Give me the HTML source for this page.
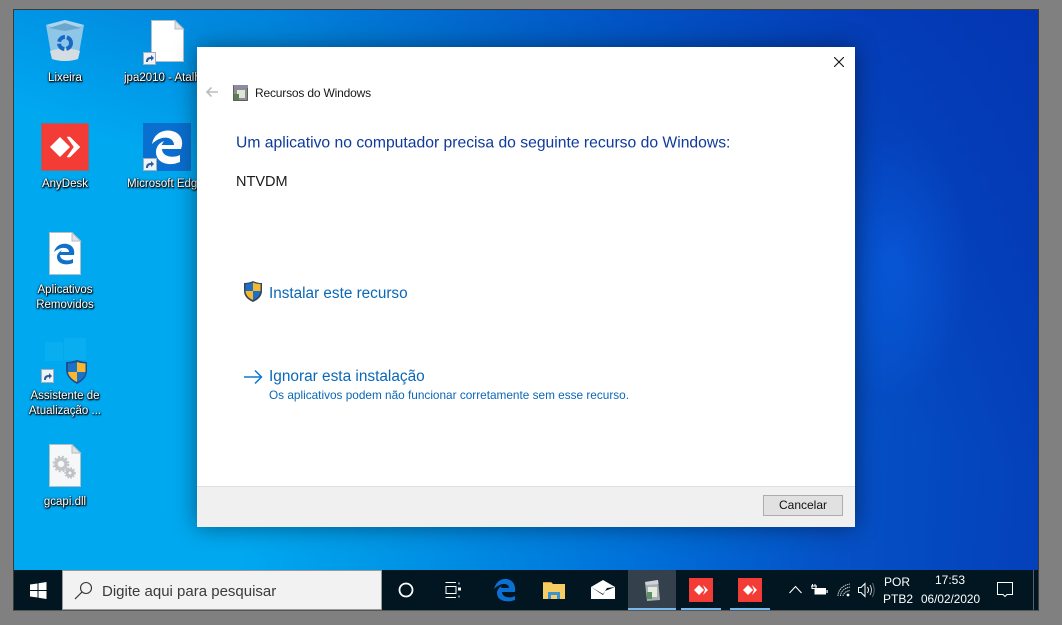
<!DOCTYPE html>
<html><head><meta charset="utf-8">
<style>
*{box-sizing:border-box}
html,body{margin:0;padding:0;width:1062px;height:625px;overflow:hidden;background:#808080;font-family:"Liberation Sans","DejaVu Sans",sans-serif}
.a{position:absolute}
.t{position:absolute;white-space:nowrap}
#desk{position:absolute;left:13px;top:9px;width:1026px;height:602px;border:1px solid #3a3a3a;border-bottom-color:#555;overflow:hidden;
background:
 radial-gradient(ellipse 75px 140px at 880px 250px,rgba(10,105,235,.8),rgba(10,105,235,0)),
 linear-gradient(93deg,#00a8f0 0,#00a8f0 24%,#0096e6 38%,#0070d8 62%,#0551c6 80%,#0440ba 100%);}
#desk:before{content:"";position:absolute;inset:0;background:linear-gradient(200deg,rgba(4,50,175,.75) 0,rgba(4,50,175,.3) 30%,rgba(4,50,175,0) 48%);}
.lab{position:absolute;color:#fff;font-size:11.500px;line-height:15px;text-align:center;text-shadow:0 1px 2px #000,1px 1px 1px #000,0 0 2px rgba(0,0,0,.8);white-space:nowrap}
#dlg{position:absolute;left:197px;top:47px;width:658px;height:480px;background:#fff;box-shadow:0 0 22px rgba(0,0,0,.45)}
#bar{position:absolute;left:14px;top:570px;width:1024px;height:40px;background:#011621}
.ul{position:absolute;height:2px;top:38px;background:#76b9ed}
</style></head><body>
<div id="desk"></div>

<!-- recycle bin -->
<svg class="a" style="left:40px;top:16px" width="50" height="50" viewBox="0 0 50 50">
<path d="M6 9 L25 4 L44 9 L38 43 Q25 47 12 43Z" fill="#8ec6e8"/>
<path d="M6 9 L25 4 L44 9 L25 15Z" fill="#a9d6ee"/>
<path d="M9 12L25 7L41 12L25 15Z" fill="#6ba6cc"/>
<path d="M10 35 Q25 30 40 35 L38 43 Q25 47 12 43Z" fill="#d6dde2"/>
<circle cx="25" cy="27" r="6" fill="none" stroke="#1668c4" stroke-width="4" stroke-dasharray="8 2"/>
</svg>
<div class="lab" style="left:25px;top:71px;width:80px">Lixeira</div>

<!-- jpa -->
<svg class="a" style="left:140px;top:18px" width="46" height="48" viewBox="0 0 46 48">
<path d="M11.500 2.500H35L43.500 11V43.500H11.500Z" fill="#fff" stroke="#b4bcc4"/>
<path d="M35 2.500V11H43.500Z" fill="#dfe3e6" stroke="#b4bcc4"/>
<rect x="3.500" y="34.500" width="12" height="12" fill="#eef3f8" stroke="#aab"/>
<path d="M6 44C6 40 8 39 11 39V37L14 40L11 43V41C9 41 8 42 8 44Z" fill="#2b5d9f"/>
</svg>
<div class="lab" style="left:124px;top:71px;width:73px;overflow:hidden;text-align:left">jpa2010 - Atalho</div>

<!-- anydesk -->
<div class="a" style="left:41px;top:123px;width:48px;height:48px;background:#f33c36;border:1px solid #8c6a78"></div>
<svg class="a" style="left:41px;top:123px" width="48" height="48" viewBox="0 0 48 48">
<path d="M9 24 L19 14 L29 24 L19 34Z" fill="#fff"/><path d="M26 14 L29 14 L39 24 L29 34 L26 34 L33 24Z" fill="#fff" stroke="#fff" stroke-width=".5"/>
</svg>
<div class="lab" style="left:25px;top:177px;width:80px">AnyDesk</div>

<!-- edge -->
<div class="a" style="left:143px;top:123px;width:48px;height:48px;background:#0a6fcf"></div>
<svg class="a" style="left:143px;top:123px" width="48" height="48" viewBox="0 0 48 48">
<path d="M9 21C11 10 21 6 29 8C38 10 41 18 38 26H19C19 33 29 36 37 32V39C26 44 13 40 13 29C13 24 16 20 21 18C18 23 18 23 19 22H31C31 14 19 11 9 21Z" fill="#fff"/>
<rect x="0.500" y="35.500" width="13" height="12" fill="#eef3f8" stroke="#aab"/>
<path d="M3 45C3 41 5 40 8 40V38L11 41L8 44V42C6 42 5 43 5 45Z" fill="#2b5d9f"/>
</svg>
<div class="lab" style="left:127px;top:177px;width:70px;overflow:hidden;text-align:left">Microsoft Edge</div>

<!-- aplicativos -->
<svg class="a" style="left:48px;top:232px" width="34" height="44" viewBox="0 0 34 44">
<path d="M1.500 .5H24L32.500 9V42.500H1.500Z" fill="#fff" stroke="#b4bcc4"/>
<path d="M24 .5V9H32.500Z" fill="#dfe3e6" stroke="#b4bcc4"/>
<path d="M6 20C8 13 14 11 19 12C25 13 27 18 26 23H12C12 28 19 30 25 27V31C18 34 9 32 9 25C9 22 11 20 14 18C13 20 12 20 13 20H21C21 15 13 14 6 20Z" fill="#0f72c8"/>
</svg>
<div class="lab" style="left:25px;top:283px;width:80px">Aplicativos<br>Removidos</div>

<!-- assistente -->
<div class="a" style="left:45px;top:342px;width:18px;height:19px;background:rgba(40,200,235,.2)"></div>
<div class="a" style="left:64px;top:338px;width:22px;height:22px;background:rgba(40,200,235,.2)"></div>
<svg class="a" style="left:40px;top:358px" width="52" height="28" viewBox="0 0 52 28">
<rect x="1.500" y="11.500" width="12" height="13" fill="#eef3f8" stroke="#aab"/>
<path d="M4 22C4 18 6 17 9 17V15L12 18L9 21V19C7 19 6 20 6 22Z" fill="#2b5d9f"/>
<path d="M26 4Q31 4 37 2Q43 4 47 4V13Q47 21 37 26Q27 21 26 13Z" fill="#1c4f91"/>
<path d="M28 5.500Q33 5.500 37 4V14H28Z" fill="#1b72c9"/><path d="M37 4Q41 5.500 45.500 5.500V14H37Z" fill="#f9b82e"/>
<path d="M28 14H37V24Q29 20 28 14Z" fill="#f9b82e"/><path d="M37 14H45.500Q45 20 37 24Z" fill="#1b72c9"/>
</svg>
<div class="lab" style="left:25px;top:389px;width:80px">Assistente de<br>Atualização ...</div>

<!-- gcapi -->
<svg class="a" style="left:48px;top:444px" width="34" height="44" viewBox="0 0 34 44">
<path d="M1.500 .5H24L32.500 9V42.500H1.500Z" fill="#f6f7f8" stroke="#b4bcc4"/>
<path d="M24 .5V9H32.500Z" fill="#dfe3e6" stroke="#b4bcc4"/>
<circle cx="13" cy="20" r="5" fill="none" stroke="#c2c6ca" stroke-width="3.500"/>
<circle cx="13" cy="20" r="7.500" fill="none" stroke="#c2c6ca" stroke-width="1.800" stroke-dasharray="2 2"/>
<circle cx="22" cy="29" r="3" fill="none" stroke="#bdc1c5" stroke-width="3"/>
<circle cx="22" cy="29" r="5" fill="none" stroke="#bdc1c5" stroke-width="1.500" stroke-dasharray="1.500 1.500"/>
</svg>
<div class="lab" style="left:25px;top:495px;width:80px">gcapi.dll</div>

<!-- dialog -->
<div id="dlg">
 <svg class="a" style="left:637px;top:10px" width="10" height="10" viewBox="0 0 10 10"><path d="M0 0L10 10M10 0L0 10" stroke="#111" stroke-width="1.100"/></svg>
 <svg class="a" style="left:8px;top:39px" width="14" height="12" viewBox="0 0 14 12"><path d="M13 6H2M6.500 1.500L2 6L6.500 10.500" fill="none" stroke="#bdbdbd" stroke-width="1.600"/></svg>
 <svg class="a" style="left:36px;top:37px" width="16" height="17" viewBox="0 0 16 17">
  <rect x=".5" y="1.500" width="14" height="15" fill="#8b8f8c" stroke="#333" stroke-width=".7"/>
  <rect x="1" y="1" width="14" height="3" fill="#8e8aa8"/><rect x="4" y="6" width="8" height="8" fill="#dfe5d8"/><rect x="1" y="10" width="5" height="6" fill="#5d7d58"/>
 </svg>
 <div class="t" style="left:58px;top:39px;font-size:12px;line-height:15px;color:#1a1a1a;letter-spacing:-.015em">Recursos do Windows</div>
 <div class="t" style="left:39px;top:86px;font-size:15.700px;line-height:20px;color:#0e3a9c;transform:translateY(0.500px)">Um aplicativo no computador precisa do seguinte recurso do Windows:</div>
 <div class="t" style="left:39px;top:126px;font-size:14.500px;line-height:18px;color:#1a1a1a">NTVDM</div>
 <svg class="a" style="left:46px;top:233px" width="20" height="23" viewBox="0 0 20 23">
  <path d="M1 3Q6 3 10 1Q14 3 19 3V11Q19 18 10 22Q1 18 1 11Z" fill="#33475e"/>
  <path d="M2.500 4Q7 4 10 2.500V11H2.500Z" fill="#1f6fc6"/><path d="M10 2.500Q13 4 17.500 4V11H10Z" fill="#f6b82c"/>
  <path d="M2.500 11H10V20Q3 17 2.500 11Z" fill="#f6b82c"/><path d="M10 11H17.500Q17 17 10 20Z" fill="#1f6fc6"/>
 </svg>
 <div class="t" style="left:72px;top:237px;font-size:15.300px;line-height:20px;color:#0a67b8">Instalar este recurso</div>
 <svg class="a" style="left:46px;top:322px" width="20" height="16" viewBox="0 0 20 16"><path d="M1 8H18.500M12 1.500L18.500 8L12 14.500" fill="none" stroke="#0a78d4" stroke-width="1.500"/></svg>
 <div class="t" style="left:72px;top:320px;font-size:15.400px;line-height:20px;color:#0a67b8">Ignorar esta instalação</div>
 <div class="t" style="left:72px;top:341px;font-size:11.800px;line-height:15px;color:#0a67b8">Os aplicativos podem não funcionar corretamente sem esse recurso.</div>
 <div class="a" style="left:0;top:439px;width:658px;height:41px;background:#f0f0f0;border-top:1px solid #dfdfdf"></div>
 <div class="a" style="left:566px;top:448px;width:80px;height:21px;background:#e1e1e1;border:1px solid #adadad;text-align:center;font-size:12px;line-height:19px;color:#111">Cancelar</div>
</div>

<!-- taskbar -->
<div id="bar">
 <svg class="a" style="left:16px;top:12px" width="17" height="17" viewBox="0 0 17 17"><path d="M0 2.500L7.500 1.500V8H0ZM8.500 1.300L16.500 0V8H8.500ZM0 9H7.500V15.500L0 14.500ZM8.500 9H16.500V17L8.500 15.700Z" fill="#fff"/></svg>
 <div class="a" style="left:48px;top:0;width:320px;height:40px;background:#f2f2f2;border:1px solid #9a9a9a"></div>
 <svg class="a" style="left:60px;top:11px" width="20" height="19" viewBox="0 0 20 19"><circle cx="12" cy="7" r="5.500" fill="none" stroke="#333" stroke-width="1.100"/><path d="M8 11L1 18" stroke="#333" stroke-width="1.200"/></svg>
 <div class="t" style="left:88px;top:12px;font-size:15px;line-height:19px;color:#3a3a3a">Digite aqui para pesquisar</div>

 <svg class="a" style="left:384px;top:12px" width="16" height="16" viewBox="0 0 16 16"><circle cx="8" cy="8" r="6.500" fill="none" stroke="#fff" stroke-width="1.800"/></svg>
 <svg class="a" style="left:431px;top:12px" width="18" height="16" viewBox="0 0 18 16"><path d="M.5 .5H11M.5 15.500H11M1 4.500H11V11.500H1Z" fill="none" stroke="#fff"/><path d="M14 0.500V2.500M14 13.500V15.500" stroke="#fff"/><rect x="13" y="5.500" width="3" height="3" fill="#fff"/></svg>
 <svg class="a" style="left:480px;top:8px" width="22" height="24" viewBox="0 0 22 24"><path d="M0 11C2 3 8 0 13 1C19 2 22 7 21 14H8C8 19 15 21 21 18V22C13 25 3 23 3 15C3 12 5 9 8 8C7 9 7 10 8 10H15C15 5 7 4 0 11Z" fill="#0b6fd3"/></svg>
 <svg class="a" style="left:529px;top:10px" width="22" height="20" viewBox="0 0 22 20"><path d="M0 2H8L10 4H22V19H0Z" fill="#f5cd62"/><path d="M0 2H8L9 3H0Z" fill="#d9a12e"/><path d="M5 12H17V19H14V15H8V19H5Z" fill="#3c93cf"/></svg>
 <svg class="a" style="left:577px;top:10px" width="24" height="20" viewBox="0 0 24 20"><path d="M0 7L12 0L24 7V19H0Z" fill="#fff"/><path d="M0 7L12 14L16 8L24 7L14 11L12 15Z" fill="#011621"/></svg>
 <div class="a" style="left:614px;top:0;width:48px;height:40px;background:#34404c"></div>
 <div class="ul" style="left:614px;width:48px"></div>
 <svg class="a" style="left:628px;top:9px" width="20" height="23" viewBox="0 0 20 23"><path d="M3 3L16 1L18 21L5 22Z" fill="#a8aeb2"/><path d="M3 3L16 1L16.500 5L4 6Z" fill="#cfd2db"/><rect x="6" y="8" width="9" height="10" fill="#e6ebdf"/><rect x="5" y="13" width="5" height="7" fill="#5f8d65"/></svg>
 <div class="a" style="left:675px;top:8px;width:24px;height:24px;background:#f33c36"></div>
 <svg class="a" style="left:675px;top:8px" width="24" height="24" viewBox="0 0 24 24"><path d="M5 12L10 7L15 12L10 17Z" fill="#fff"/><path d="M14 7L19 12L14 17L16 12Z" fill="#fff"/></svg>
 <div class="ul" style="left:667px;width:40px"></div>
 <div class="a" style="left:724px;top:8px;width:24px;height:24px;background:#f33c36"></div>
 <svg class="a" style="left:724px;top:8px" width="24" height="24" viewBox="0 0 24 24"><path d="M5 12L10 7L15 12L10 17Z" fill="#fff"/><path d="M14 7L19 12L14 17L16 12Z" fill="#fff"/></svg>
 <div class="ul" style="left:716px;width:40px"></div>

 <svg class="a" style="left:775px;top:15px" width="13" height="9" viewBox="0 0 13 9"><path d="M.5 8L6.500 1.500L12.500 8" fill="none" stroke="#fff" stroke-width="1.100"/></svg>
 <svg class="a" style="left:797px;top:13px" width="17" height="13" viewBox="0 0 17 13"><path d="M0 3H6M1.500 1V3M4 1V3M1 3V5.500H5V3" stroke="#fff" fill="none"/><rect x="3.500" y="5" width="11.500" height="6.500" fill="#fff"/><rect x="15.500" y="7" width="1.200" height="3" fill="#fff"/></svg>
 <svg class="a" style="left:823px;top:13px" width="14" height="14" viewBox="0 0 14 14"><path d="M1 13C1 7 6 2 13 1M3.500 13C3.500 9 7 5 13 4M6 13C6 11 9 8 13 7.500" fill="none" stroke="#cfd3d6" stroke-width="1" stroke-dasharray="1.500 .7"/><circle cx="11" cy="12" r="1.400" fill="#fff"/></svg>
 <svg class="a" style="left:844px;top:12px" width="17" height="16" viewBox="0 0 17 16"><path d="M.5 5.500H3L7 1.500V14.500L3 10.500H.5Z" fill="none" stroke="#fff"/><path d="M9.500 5Q11.500 8 9.500 11" fill="none" stroke="#fff"/><path d="M12 3Q15 8 12 13" fill="none" stroke="#ccc"/><path d="M14.500 1Q18 8 14.500 15" fill="none" stroke="#666"/></svg>
 <div class="t" style="left:869px;top:5px;width:28px;text-align:center;font-size:12px;line-height:15px;color:#fff">POR</div>
 <div class="t" style="left:869px;top:22px;width:28px;text-align:center;font-size:12px;line-height:15px;color:#fff">PTB2</div>
 <div class="t" style="left:907px;top:3px;width:58px;text-align:center;font-size:12px;line-height:15px;color:#fff">17:53</div>
 <div class="t" style="left:907px;top:22px;width:58px;text-align:center;font-size:11.800px;line-height:15px;color:#fff">06/02/2020</div>
 <svg class="a" style="left:983px;top:12px" width="17" height="17" viewBox="0 0 17 17"><path d="M.5 .5H15.500V12.500H10L8 14.500L6 12.500H.5Z" fill="none" stroke="#fff"/></svg>
 <div class="a" style="left:1019px;top:0;width:1px;height:40px;background:#55606a"></div>
</div>
</body></html>
